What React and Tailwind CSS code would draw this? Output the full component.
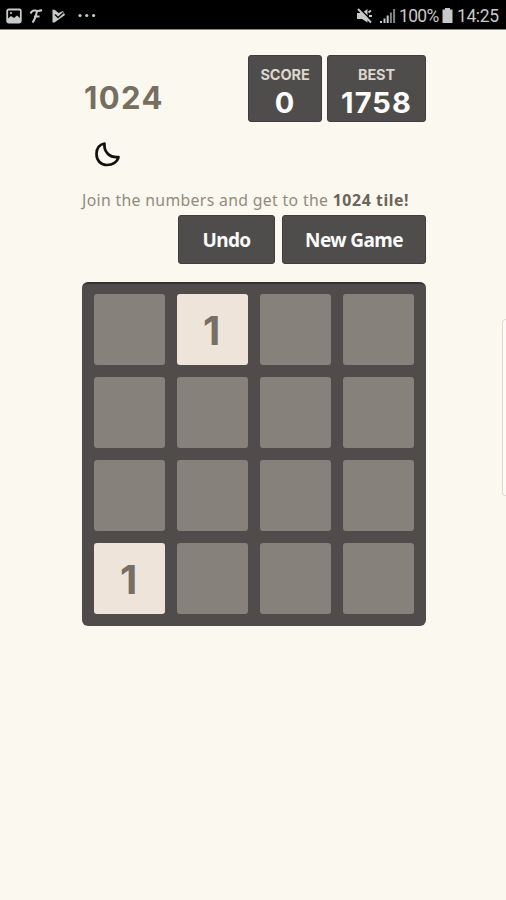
import React from "react";

const FILLED = [1, 12];

function StatusBar() {
  return (
    <div className="flex h-[30px] items-center justify-between border-b border-[#8a8984] bg-black pb-px pl-[6px] pr-[6px] pt-[3px] text-[#c9c9c9]">
      <div className="flex items-center">
        <svg className="h-[16px] w-[16px]" viewBox="0 0 16 16">
          <rect x="1.2" y="1.500" width="13.600" height="13" rx="1.5" fill="none" stroke="currentColor" strokeWidth="1.800" />
          <path d="M2 14V10.500l3-2.500 3 2 3-2.500 3 2.500v4z" fill="currentColor" />
          <circle cx="5" cy="5" r="1.100" fill="currentColor" />
        </svg>
        <svg className="ml-[6px] h-[16px] w-[16px]" viewBox="0 0 16 16" fill="none" stroke="currentColor">
          <path d="M2.500 5.500Q4 2 7 2.500Q11 3.500 14 2" strokeWidth="2" />
          <path d="M9 3Q7.500 11 4.500 14.500M6 8.500H11.500" strokeWidth="2" />
        </svg>
        <svg className="ml-[7px] h-[16px] w-[16px]" viewBox="0 0 16 16">
          <path d="M1.500 1.500L4 2L7.500 5L12 3L14 7L3.500 14.500H1.500z" fill="currentColor" />
          <path d="M4 6.500l3 3L12.500 4.500" fill="none" stroke="#111" strokeWidth="1.500" />
        </svg>
        <svg className="ml-[11px] h-[16px] w-[18px]" viewBox="0 0 18 16" fill="currentColor">
          <circle cx="2" cy="7.500" r="1.6" />
          <circle cx="8.800" cy="7.500" r="1.6" />
          <circle cx="15.600" cy="7.500" r="1.6" />
        </svg>
      </div>
      <div className="flex items-center">
        <svg className="h-[18px] w-[17px]" viewBox="0 0 17 18">
          <path d="M1 6h5l5.500-4v13.500L6 12H1z" fill="currentColor" />
          <path d="M12.500 5.500l2.500-2M13 9H16" stroke="currentColor" strokeWidth="1.8" />
          <path d="M3.500 1.500l13 13" stroke="#000" strokeWidth="1.600" />
          <path d="M2 2l13 13.500" stroke="currentColor" strokeWidth="1.9" />
        </svg>
        <svg className="ml-[6px] h-[16px] w-[17px]" viewBox="0 0 17 16" fill="currentColor">
          <path d="M1 13h2v2H1zM4.500 10.500h2V15h-2zM7.700 7.500h2V15h-2z" />
          <path d="M10.900 4.500h2V15h-2zM14.100 1h2v14h-2z" opacity=".65" />
        </svg>
        <span className="ml-[3px] w-[41px] whitespace-nowrap font-['Roboto',sans-serif] text-[17.500px] leading-[20px] tracking-[-0.7px]">100%</span>
        <svg className="ml-[2px] h-[17px] w-[11px]" viewBox="0 0 11 17" fill="currentColor">
          <path d="M3 1h5v1.500h2.500V16H.5V2.500H3z" />
        </svg>
        <span className="ml-[4px] w-[43px] whitespace-nowrap font-['Roboto',sans-serif] text-[17.500px] leading-[20px] tracking-[-0.400px]">14:25</span>
      </div>
    </div>
  );
}

function ScoreBox({ label, value, className }) {
  return (
    <div className={`flex h-[67px] flex-col items-center rounded-[3px] border border-[#3f3d3d] bg-[#4f4c4c] pt-[10px] font-['Inter',sans-serif] font-bold ${className}`}>
      <div className="text-[14.500px] leading-[18px] tracking-[-0.1px] text-[#ddd6cc]">{label}</div>
      <div className="mt-[4px] text-[29px] leading-[30px] tracking-[1.100px] text-white">{value}</div>
    </div>
  );
}

function Button({ children, className }) {
  return (
    <button className={`h-[49px] whitespace-nowrap rounded-[3px] border border-[#3f3d3d] bg-[#4f4c4c] pt-[2px] text-[19px] font-bold tracking-[-0.6px] text-[#fafafa] ${className}`}>
      {children}
    </button>
  );
}

export default function App() {
  return (
    <div className="flex h-[900px] w-[506px] flex-col overflow-hidden bg-[#fbf8ef] font-['Noto_Sans',sans-serif]">
      <StatusBar />
      <div className="flex flex-1">
        <main className="ml-[82px] mt-[25px] w-[344px]">
          <header className="flex h-[67px]">
            <h1 className="ml-[2px] mt-[21px] flex-1 font-['Inter',sans-serif] text-[31px] font-bold leading-[44px] tracking-[1.400px] text-[#776e62]">1024</h1>
            <ScoreBox label="SCORE" value="0" className="w-[74px]" />
            <ScoreBox label="BEST" value="1758" className="ml-[5px] w-[99px]" />
          </header>
          <div className="ml-[12px] mt-[19px] h-[27px]">
            <svg className="h-[27px] w-[27px]" viewBox="0 0 27 27" fill="none" stroke="#111" strokeWidth="2.700" strokeLinejoin="round">
              <path d="M10.500 2.500C5.500 3.500 2.500 7.500 2.500 13C2.500 19.500 7 24 13 24C18.500 24 23.500 21 24.500 16C20 16.500 16.500 15.500 14 13C11.200 10.200 10 7 10.500 2.500Z" />
            </svg>
          </div>
          <p className="mt-[21px] h-[26px] whitespace-nowrap text-[15.800px] font-normal leading-[22px] tracking-[0.330px] text-[#928b7e]">
            Join the numbers and get to the <b className="tracking-[0.600px] text-[#6b6458]">1024 tile!</b>
          </p>
          <div className="flex justify-end">
            <Button className="w-[97px]">Undo</Button>
            <Button className="ml-[7px] w-[144px]">New Game</Button>
          </div>
          <div className="mt-[18px] grid h-[344px] grid-cols-4 grid-rows-4 gap-[11.700px] rounded-[6px] border-t-2 border-[#333] bg-[#4f4c4b] px-[12px] pb-[12px] pt-[10px]">
            {Array.from({ length: 16 }, (_, i) =>
              FILLED.includes(i) ? (
                <div key={i} className="flex items-center justify-center rounded-[3px] bg-[#eee4da] pr-[2px] pt-[3px] font-['Inter',sans-serif] text-[40px] font-bold leading-none text-[#776e65]">
                  1
                </div>
              ) : (
                <div key={i} className="rounded-[3px] bg-[#87817c]" />
              )
            )}
          </div>
        </main>
        <div className="ml-auto mt-[289px] h-[177px] w-[4px] rounded-l-[4px] border border-r-0 border-[#dedbd2] bg-[#fcfbf5]" />
      </div>
    </div>
  );
}
